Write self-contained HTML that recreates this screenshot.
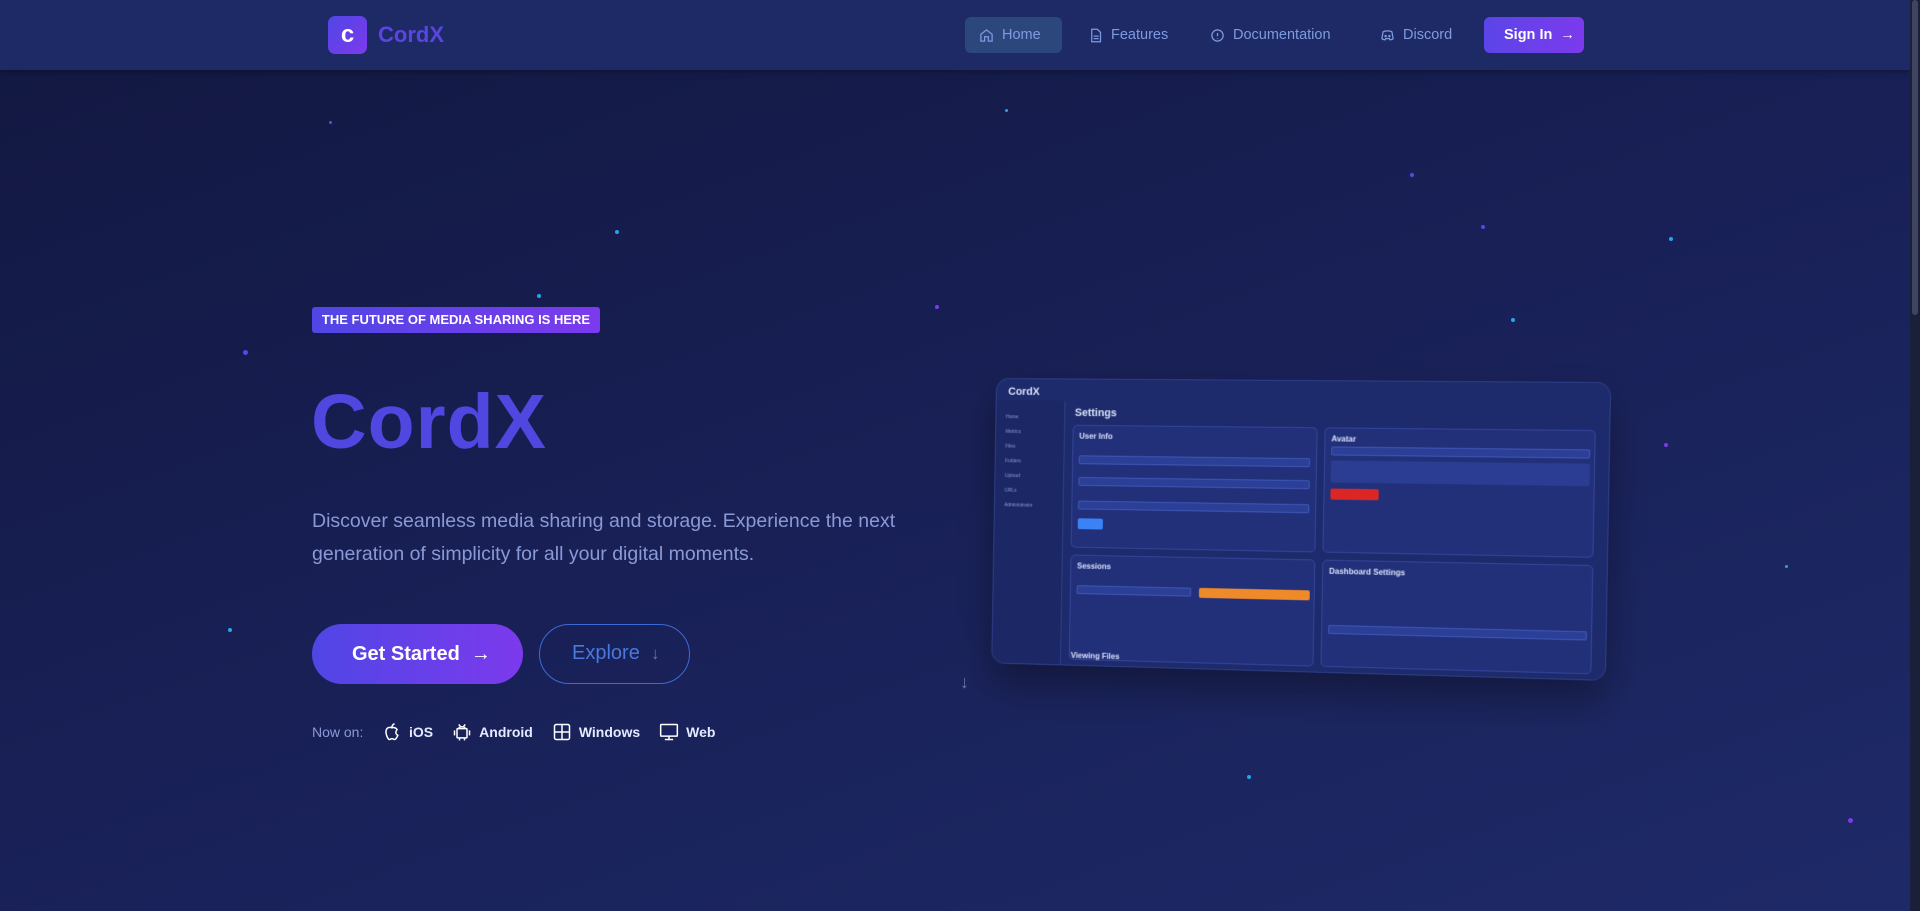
<!DOCTYPE html>
<html><head><meta charset="utf-8"><style>
*{margin:0;padding:0;box-sizing:border-box}
body{width:1920px;height:911px;overflow:hidden;font-family:"Liberation Sans",sans-serif;background:linear-gradient(160deg,#121840 0%,#182056 50%,#1e2a68 100%);position:relative}
.nav{position:absolute;left:0;top:0;width:1910px;height:70px;background:#1e2a66;box-shadow:0 2px 6px rgba(0,0,0,.3)}
.logo{position:absolute;left:328px;top:16px;width:39px;height:38px;border-radius:7px;background:linear-gradient(135deg,#5046e5,#7c3aed);color:#fff;font-weight:bold;font-size:24px;text-align:center;line-height:38px}
.brand{position:absolute;left:378px;top:22px;font-size:22px;font-weight:bold;color:#5b45e0}
.ni{position:absolute;top:17px;height:36px;line-height:36px;font-size:14.5px;color:#7f9be0;display:flex;align-items:center;gap:8px;padding:0 14px;border-radius:6px}
.ni svg{width:15px;height:15px;stroke:#7f9be0;fill:none;stroke-width:2}
.sign{position:absolute;left:1484px;top:17px;width:100px;height:36px;border-radius:6px;background:linear-gradient(90deg,#5b45e8,#7c3aed);color:#fff;font-weight:bold;font-size:14.5px;line-height:36px;padding-left:20px}
.badge{position:absolute;left:312px;top:307px;width:288px;height:26px;border-radius:3px;background:linear-gradient(90deg,#5046e5,#7c3aed);color:#fff;font-weight:bold;font-size:13px;line-height:26px;text-align:center}
h1{position:absolute;left:311px;top:378px;font-size:77px;font-weight:900;color:#5046e0;letter-spacing:1px}
p.d{position:absolute;left:312px;top:505px;width:620px;font-size:19.5px;line-height:33px;color:#8a9ad6}
.gs{position:absolute;left:312px;top:624px;width:211px;height:60px;border-radius:30px;background:linear-gradient(90deg,#5046e5,#7c3aed);color:#fff;font-size:20px;font-weight:bold;line-height:60px;padding-left:40px}
.ex{position:absolute;left:539px;top:624px;width:151px;height:60px;border-radius:30px;border:1.5px solid #3b6ad8;color:#4a78dc;font-size:20px;line-height:57px;padding-left:32px}
.now{position:absolute;left:312px;top:722px;display:flex;align-items:center;font-size:14px;color:#8a9ad6;gap:7px}
.now b{color:#e6eaff;margin-right:12px}
.now svg{width:20px;height:20px;stroke:#fff;fill:none;stroke-width:1.8}
.st{position:absolute;border-radius:50%}
.mock{position:absolute;left:985px;top:380px;width:618px;height:292px;border-radius:14px;background:#1d2a6b;box-shadow:0 20px 40px rgba(0,0,0,.35);transform:perspective(1400px) rotateY(-6deg) rotateZ(1deg);overflow:hidden;border:1px solid #2e3e88;filter:blur(.4px)}
.mock .card{position:absolute;background:#22307a;border:1px solid #34459a;border-radius:5px}
.mock .t{position:absolute;color:#dfe6ff;font-weight:bold}
.fld{position:absolute;height:9px;background:#2c3f96;border:1px solid #3f56b5;border-radius:2px}
.scroll{position:absolute;right:0;top:0;width:10px;height:911px;background:#1a1f3a}
.scroll div{position:absolute;left:2px;top:0;width:6px;height:315px;background:#3f4560;border-radius:3px}
</style></head><body>
<div class="nav">
<div class="logo">c</div><div class="brand">CordX</div>
<div class="ni" style="left:965px;background:#2b477c;width:97px"><svg viewBox="0 0 24 24"><path d="M3 10l9-7 9 7v11h-6v-7H9v7H3z"/></svg>Home</div>
<div class="ni" style="left:1074px"><svg viewBox="0 0 24 24"><path d="M6 2h9l5 5v15H6z M9 13h8M9 17h8"/></svg>Features</div>
<div class="ni" style="left:1196px"><svg viewBox="0 0 24 24"><circle cx="12" cy="12" r="9"/><path d="M12 8v5M12 16v1"/></svg>Documentation</div>
<div class="ni" style="left:1366px"><svg viewBox="0 0 24 24"><path d="M5 6c3-2 11-2 14 0l2 11c-2 2-4 2-5 2l-1-2H9l-1 2c-1 0-3 0-5-2z"/><circle cx="9" cy="13" r="1"/><circle cx="15" cy="13" r="1"/></svg>Discord</div>
<div class="sign">Sign In &nbsp;→</div>
</div>
<div class="badge">THE FUTURE OF MEDIA SHARING IS HERE</div>
<h1>CordX</h1>
<p class="d">Discover seamless media sharing and storage. Experience the next generation of simplicity for all your digital moments.</p>
<div class="gs">Get Started &nbsp;→</div>
<div class="ex">Explore &nbsp;<span style="font-size:17px">↓</span></div>
<div class="now">Now on: &nbsp;&nbsp;
<svg viewBox="0 0 24 24"><path d="M12 7c-2-1-6-1-7 3-1 4 2 11 4 11 1 0 2-1 3-1s2 1 3 1c2 0 3-3 4-5-2-1-3-3-2-5l1-2c-1-2-4-3-6-2zM12 6c0-2 1-3 3-4"/></svg><b>iOS</b>
<svg viewBox="0 0 24 24"><rect x="6" y="8" width="12" height="11" rx="1"/><path d="M3 10v6M21 10v6M9 19v3M15 19v3M8 8c0-3 8-3 8 0M8 3l2 2M16 3l-2 2"/></svg><b>Android</b>
<svg viewBox="0 0 24 24"><rect x="3" y="3" width="18" height="18" rx="2"/><path d="M12 3v18M3 12h18"/></svg><b>Windows</b>
<svg viewBox="0 0 24 24"><rect x="2" y="3" width="20" height="14" rx="1"/><path d="M12 17v4M7 21h10"/></svg><b>Web</b>
</div>
<div style="position:absolute;left:960px;top:672px;color:#6a7ab0;font-size:18px">↓</div>

<div class="mock">
<div class="t" style="left:12px;top:7px;font-size:11px">CordX</div>
<div style="position:absolute;left:0;top:22px;width:72px;height:270px;background:#1c2866;border-right:1px solid #2e3e88"></div>
<div style="position:absolute;left:10px;top:32px;width:55px;color:#8a9ad6;font-size:5px;line-height:15px">Home<br>Metrics<br>Files<br>Folders<br>Upload<br>URLs<br>Administrator</div>
<div class="t" style="left:82px;top:28px;font-size:11px">Settings</div>
<div class="card" style="left:80px;top:46px;width:250px;height:125px"><div class="t" style="left:6px;top:6px;font-size:8px">User Info</div>
<div class="fld" style="left:6px;top:30px;width:236px"></div><div class="fld" style="left:6px;top:52px;width:236px"></div><div class="fld" style="left:6px;top:76px;width:236px"></div>
<div style="position:absolute;left:6px;top:94px;width:26px;height:11px;background:#3b82f6;border-radius:2px"></div></div>
<div class="card" style="left:337px;top:46px;width:266px;height:125px"><div class="t" style="left:6px;top:6px;font-size:8px">Avatar</div>
<div class="fld" style="left:6px;top:18px;width:254px"></div>
<div style="position:absolute;left:6px;top:32px;width:254px;height:22px;background:#2a3d92;border-radius:2px"></div>
<div style="position:absolute;left:6px;top:60px;width:48px;height:11px;background:#dc2626;border-radius:2px"></div></div>
<div class="card" style="left:80px;top:178px;width:250px;height:107px"><div class="t" style="left:6px;top:6px;font-size:8px">Sessions</div>
<div class="fld" style="left:6px;top:30px;width:118px"></div>
<div style="position:absolute;left:132px;top:30px;width:112px;height:10px;background:#ee8a2a;border-radius:2px"></div></div>
<div class="card" style="left:337px;top:178px;width:266px;height:107px"><div class="t" style="left:6px;top:6px;font-size:8px">Dashboard Settings</div>
<div class="fld" style="left:6px;top:64px;width:254px"></div></div>
<div class="t" style="left:82px;top:276px;font-size:8px">Viewing Files</div>
</div>

<div class="st" style="left:329px;top:121px;width:3px;height:3px;background:#7c3aed"></div>
<div class="st" style="left:615px;top:230px;width:4px;height:4px;background:#22a6e8"></div>
<div class="st" style="left:537px;top:294px;width:4px;height:4px;background:#22a6e8"></div>
<div class="st" style="left:243px;top:350px;width:5px;height:5px;background:#5b45e8"></div>
<div class="st" style="left:935px;top:305px;width:4px;height:4px;background:#7c3aed"></div>
<div class="st" style="left:228px;top:628px;width:4px;height:4px;background:#22a6e8"></div>
<div class="st" style="left:1005px;top:109px;width:3px;height:3px;background:#22a6e8"></div>
<div class="st" style="left:1410px;top:173px;width:4px;height:4px;background:#5b45e8"></div>
<div class="st" style="left:1481px;top:225px;width:4px;height:4px;background:#5b45e8"></div>
<div class="st" style="left:1669px;top:237px;width:4px;height:4px;background:#22a6e8"></div>
<div class="st" style="left:1511px;top:318px;width:4px;height:4px;background:#22a6e8"></div>
<div class="st" style="left:1664px;top:443px;width:4px;height:4px;background:#7c3aed"></div>
<div class="st" style="left:1848px;top:818px;width:5px;height:5px;background:#7c3aed"></div>
<div class="st" style="left:1247px;top:775px;width:4px;height:4px;background:#22a6e8"></div>
<div class="st" style="left:1785px;top:565px;width:3px;height:3px;background:#22a6e8"></div>
<div class="scroll"><div></div></div>
</body></html>
